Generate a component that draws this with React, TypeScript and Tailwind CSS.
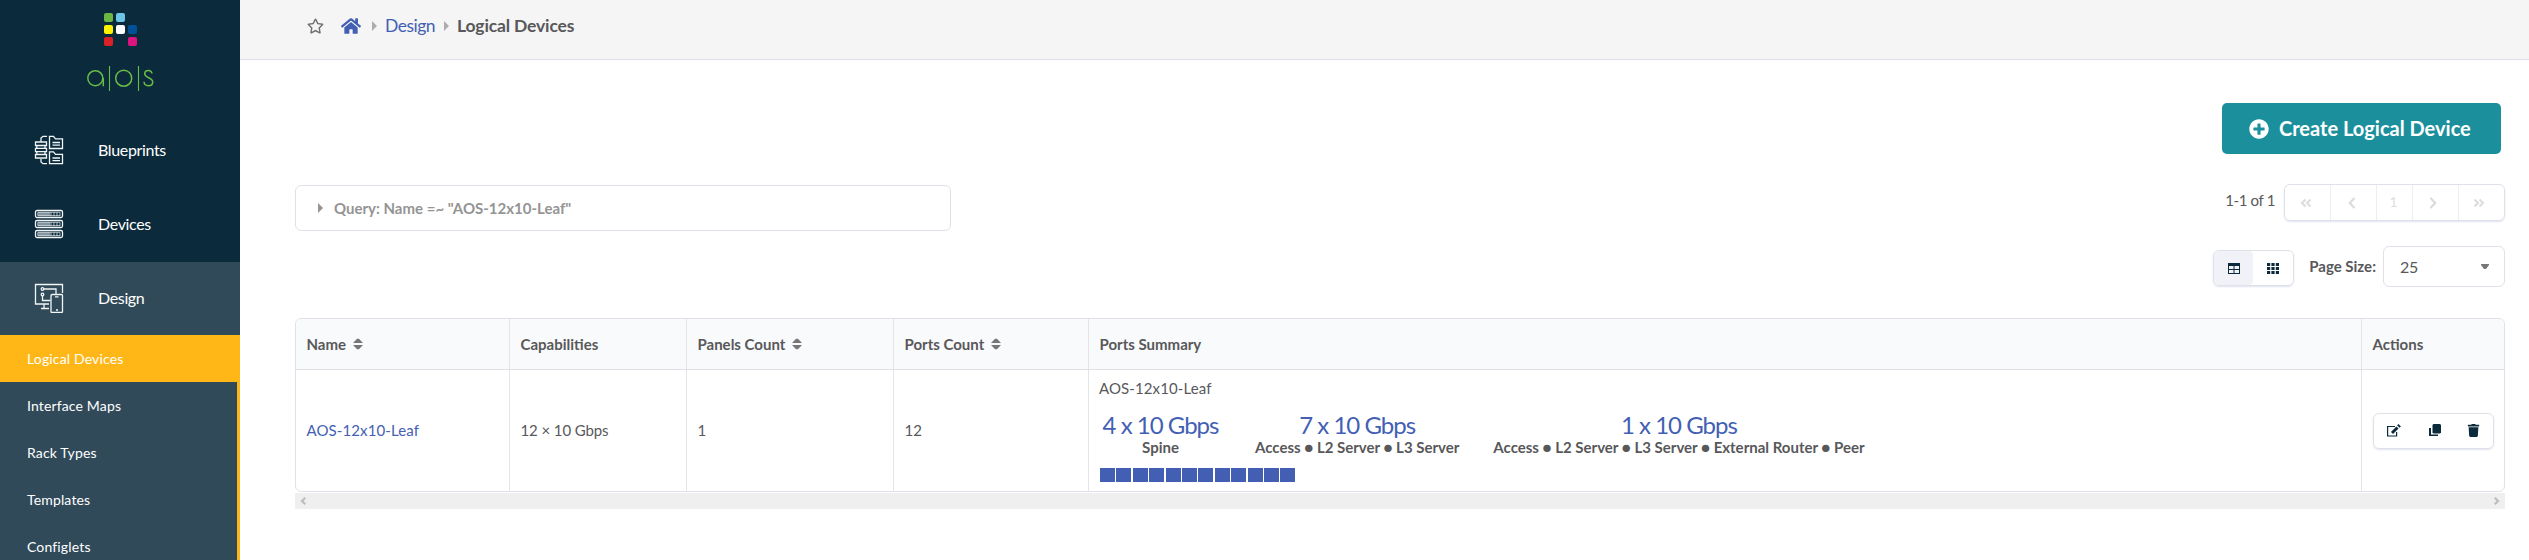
import React from "react";
import { FaHome, FaPlusCircle, FaRegStar, FaTrash } from "react-icons/fa";

const palette = ["#6cb644", "#6cc5e5", "", "#fff200", "#ffffff", "#005196", "#da2128", "", "#dc147f"];

function Logo() {
  return (
    <div className="flex h-[113px] flex-col items-center pt-[13px]">
      <div className="grid grid-cols-[9px_9px_9px] gap-[3px]">
        {palette.map((c, i) => (
          <i key={i} className="h-[9px] w-[9px] rounded-[2px]" style={{ background: c || "transparent" }} />
        ))}
      </div>
      <svg className="mt-[20px]" width="68" height="26" viewBox="0 0 68 26" fill="none" stroke="#68bd45" strokeWidth="1.5">
        <circle cx="9.3" cy="12.2" r="7.5" />
        <path d="M17.300 12v8.300" />
        <path d="M23.500 0v25M52.500 0v25" strokeWidth="1.100" />
        <circle cx="37.7" cy="12.2" r="8" />
        <path d="M66 7.500c-.3-1.800-1.700-2.900-3.600-2.900-2.100 0-3.700 1.300-3.700 3.200 0 4.600 8 3.200 8 8.100 0 2.300-1.800 3.800-4.200 3.800-2.500 0-4.300-1.500-4.500-3.900" />
      </svg>
    </div>
  );
}

function BlueprintsIcon() {
  return (
    <svg width="30" height="30" viewBox="0 0 30 30" fill="none" stroke="#f1f5f6" strokeWidth="1.300">
      <path d="M7 6.500V3l2-1.700h4M7 24v3l2 1.700h4M1.500 7h11v3.500h-11zM1.500 13.300h11v3.400h-11zM1.500 19.500h11V23h-11zM2.800 10.500v3M11 10.500v3M2.800 16.700v3M11 16.700v3" />
      <path d="M15.500 1.300h4l2 2.500h7v9.700h-13zM18.500 7.500h7.500M18.500 10.200h7.500M15.500 16.800h4l2 2.500h7v9.400h-13zM18.500 23h7.500M18.500 25.700h7.500" />
    </svg>
  );
}

function DevicesIcon() {
  return (
    <svg width="30" height="30" viewBox="0 0 30 30" fill="none" stroke="#f1f5f6" strokeWidth="1.300">
      {[1.5, 11.5, 21.5].map((y) => (
        <g key={y}>
          <rect x="1.500" y={y} width="27" height="7" rx="1.500" />
          <rect x="3" y={y + 1.8} width="13" height="3.500" fill="#8496a2" stroke="none" />
          <path d={`M4 ${y + 1.8}h22M4 ${y + 5.2}h22M17 ${y + 2}v3.500M20 ${y + 2}v3.500M23 ${y + 2}v3.500M26 ${y + 2}v3.500`} strokeWidth="0.900" opacity=".8" />
        </g>
      ))}
    </svg>
  );
}

function DesignIcon() {
  return (
    <svg width="30" height="30" viewBox="0 0 30 30" fill="none" stroke="#f1f5f6" strokeWidth="1.300">
      <path d="M15 21H1.500V1.500h27V10M10 21.500V25M7 25.500h8" />
      <rect x="17" y="11.500" width="11.500" height="18" rx="1" />
      <circle cx="8.500" cy="6" r="1.300" />
      <circle cx="8.500" cy="11.500" r="1.300" />
      <path d="M10 6h12v5M8.500 13v4.500H16.500M21 13.800h3.500M22 27h2" />
    </svg>
  );
}

const mainItems = [
  { label: "Blueprints", Icon: BlueprintsIcon },
  { label: "Devices", Icon: DevicesIcon },
  { label: "Design", Icon: DesignIcon },
];
const subItems = ["Interface Maps", "Rack Types", "Templates", "Configlets"];

function Sidebar() {
  return (
    <aside className="h-[560px] w-[240px] shrink-0 overflow-hidden bg-[#0b2a3b] text-white">
      <Logo />
      {mainItems.map(({ label, Icon }, i) => (
        <div key={label} className={i === 2 ? "flex h-[73px] items-center bg-[#304a5a] pb-[2px] pl-[34px]" : "flex h-[74.500px] items-center pb-px pl-[34px]"}>
          <Icon />
          <span className="ml-[34px] text-[16px] tracking-[-0.35px]">{label}</span>
        </div>
      ))}
      <div className="flex h-[47px] items-center bg-[#ffb718] pl-[27px] text-[14px] tracking-[0.15px]">Logical Devices</div>
      <div className="h-[188px] border-r-[3px] border-[#ffb718] bg-[#304a5a]">
        {subItems.map((s) => (
          <div key={s} className="flex h-[47px] items-center pl-[27px] text-[14px] tracking-[0.15px]">{s}</div>
        ))}
      </div>
    </aside>
  );
}

function RightArrow({ className = "" }: { className?: string }) {
  return (
    <svg width="5" height="10" viewBox="0 0 5 10" fill="currentColor" className={className}>
      <path d="M0 0 5 5 0 10z" />
    </svg>
  );
}

function Breadcrumbs() {
  return (
    <header className="flex h-[60px] border-b border-[#dedfe6] bg-[#f5f5f5] pl-[67px]">
      <div className="flex h-[52px] items-center text-[17.500px]">
        <FaRegStar className="w-[17px] text-[#6f6f6f]" size={16} />
        <FaHome className="ml-[17px] text-[#435fb4]" size={20} />
        <RightArrow className="ml-[11px] text-[#adadad]" />
        <span className="ml-[8px] w-[52px] tracking-[-0.5px] text-[#435fb4]">Design</span>
        <RightArrow className="ml-[7px] text-[#adadad]" />
        <b className="ml-[8px] tracking-[-0.15px] text-[#58585a]">Logical Devices</b>
      </div>
    </header>
  );
}

const pageButton = "flex h-full items-center justify-center border-r border-[#eeeef2]";

function Chevron({ flip = false, double = false }: { flip?: boolean; double?: boolean }) {
  return (
    <svg width="12" height="12" viewBox="0 0 12 12" fill="none" stroke="currentColor" strokeWidth="2" className={flip ? "rotate-180" : ""}>
      {double ? <path d="M5.500 2.500 2 6l3.500 3.500M10.500 2.500 7 6l3.500 3.500" /> : <path d="M8.500 1 3.800 6l4.700 5" strokeWidth="2.300" />}
    </svg>
  );
}

function ScrollArrow({ flip = false }: { flip?: boolean }) {
  return (
    <svg width="6" height="8" viewBox="0 0 6 8" fill="none" stroke="#bdbdbd" strokeWidth="2.200" className={flip ? "rotate-180" : ""}>
      <path d="M5.200.800 2 4l3.200 3.200" />
    </svg>
  );
}

function SortIcon() {
  return (
    <svg width="10" height="12" viewBox="0 0 10 12" fill="#77777a" className="ml-[7px]">
      <path d="M0 5 4 .700h2L10 5zM0 7h10L6 11.300H4z" />
    </svg>
  );
}

function TableIcon() {
  return (
    <svg width="12" height="11" viewBox="0 0 12 11">
      <path fill="#0b2a3b" fillRule="evenodd" d="M0 0h12v11H0zM1 3v3h4.500V3zM6.500 3v3H11V3zM1 7v3h4.500V7zM6.500 7v3H11V7z" />
    </svg>
  );
}

function GridIcon() {
  return (
    <svg width="12" height="11" viewBox="0 0 12 11" fill="#0b2a3b">
      {[0, 4, 8].map((y) => [0, 4.4, 8.8].map((x) => <rect key={`${x}-${y}`} x={x} y={y} width="3.200" height="3" />))}
    </svg>
  );
}

function EditIcon() {
  return (
    <svg width="15" height="13" viewBox="0 0 15 13" fill="none" stroke="#0b2a3b">
      <path d="M8 2.500H.600v9.500h9V8" strokeWidth="1.200" />
      <path d="M5 9 10.500 3.500" strokeWidth="3" />
      <path d="m11.300 2.600 1.400-1.300" strokeWidth="3.400" />
    </svg>
  );
}

function CopyIcon() {
  return (
    <svg width="12" height="13" viewBox="0 0 12 13" fill="#0b2a3b">
      <path d="M4.500 0H11l1 1v7.500l-1 1H4.500l-1-1V1z" />
      <path d="M0 4h2v6.500h7V12H0z" />
    </svg>
  );
}

const columns = [
  { label: "Name", sort: true },
  { label: "Capabilities", sort: false },
  { label: "Panels Count", sort: true },
  { label: "Ports Count", sort: true },
  { label: "Ports Summary", sort: false },
  { label: "Actions", sort: false },
];
const groups = [
  { speed: "4 x 10 Gbps", roles: "Spine" },
  { speed: "7 x 10 Gbps", roles: "Access ● L2 Server ● L3 Server" },
  { speed: "1 x 10 Gbps", roles: "Access ● L2 Server ● L3 Server ● External Router ● Peer" },
];
const gridCols = "grid grid-cols-[214px_177px_207px_195px_1273px_142px]";
const cell = "flex items-center border-r border-[#e3e4e8] pl-[10.500px] last:border-r-0";

function Table() {
  return (
    <div className="h-[174px] overflow-hidden rounded-[6px] border border-[#dfe0e8]">
      <div className={`${gridCols} h-[51px] border-b border-[#dfe0e4] bg-[#f9fafb] font-bold`}>
        {columns.map((c) => (
          <div key={c.label} className={cell}>
            {c.label}
            {c.sort && <SortIcon />}
          </div>
        ))}
      </div>
      <div className={`${gridCols} h-[121px]`}>
        <div className={`${cell} tracking-[0.1px] text-[#435fb4]`}>AOS-12x10-Leaf</div>
        <div className={`${cell} tracking-[-0.1px]`}>12 × 10 Gbps</div>
        <div className={cell}>1</div>
        <div className={cell}>12</div>
        <div className="border-r border-[#e3e4e8] pl-[11px] pt-[7px]">
          <div className="-ml-px h-[22px] leading-[22px] tracking-[0.1px]">AOS-12x10-Leaf</div>
          <div className="mt-[14px] flex gap-[34px]">
            {groups.map((g) => (
              <div key={g.speed} className="min-w-[121px] text-center">
                <div className="h-[24px] text-[24px] leading-[24px] tracking-[-1px] text-[#435fb4]">{g.speed}</div>
                <div className="h-[20px] text-[15px] font-bold leading-[20px]">{g.roles}</div>
              </div>
            ))}
          </div>
          <div className="mt-[11px] flex gap-[1.400px]">
            {Array.from({ length: 12 }, (_, i) => (
              <i key={i} className="h-[14px] w-[15px] bg-[#435fb4]" />
            ))}
          </div>
        </div>
        <div className="flex items-center pl-[11px]">
          <div className="flex h-[36px] w-[121px] items-center rounded-[6px] border border-[#dfe0e8] pl-[13px] shadow-[0_1px_2px_#dfe3ee]">
            <EditIcon />
            <span className="ml-[27px]"><CopyIcon /></span>
            <FaTrash className="ml-[26px] text-[#0b2a3b]" size={13} />
          </div>
        </div>
      </div>
    </div>
  );
}

export default function App() {
  return (
    <div className="flex h-[560px] w-[2529px] overflow-hidden bg-white font-['Lato',sans-serif] text-[15px] text-[#58585a]">
      <Sidebar />
      <div className="min-w-0 flex-1">
        <Breadcrumbs />
        <main className="pl-[55px] pr-[24px]">
          <div className="flex h-[124px] justify-end pr-[4px] pt-[43px]">
            <button className="flex h-[51px] w-[279px] items-center rounded-[5px] bg-[#1b909c] pl-[27px] text-[20px] font-bold text-white">
              <FaPlusCircle size={20} />
              <span className="mb-px ml-[10px]">Create Logical Device</span>
            </button>
          </div>
          <div className="flex h-[62px] justify-between">
            <div className="mt-px flex h-[46px] w-[656px] items-center rounded-[6px] border border-[#dfe0e8] pl-[22px] font-bold text-[#949494]">
              <RightArrow />
              <span className="ml-[11px]">Query: Name =~ "AOS-12x10-Leaf"</span>
            </div>
            <div className="flex">
              <span className="mr-[9px] mt-[5px] leading-[22px] tracking-[-0.35px]">1-1 of 1</span>
              <div className="flex h-[37px] w-[221px] overflow-hidden rounded-[6px] border border-[#dfe0e8] text-[13px] text-[#dcdcdd] shadow-[0_1px_2px_#dfe3ee]">
                <div className={`${pageButton} w-[46px] pr-[4px]`}><Chevron double /></div>
                <div className={`${pageButton} w-[46px] pr-[3px]`}><Chevron /></div>
                <div className={`${pageButton} w-[36px] pr-[2px]`}>1</div>
                <div className={`${pageButton} w-[46px] pr-[6px]`}><Chevron flip /></div>
                <div className="flex flex-1 items-center justify-center pr-[5px]"><Chevron flip double /></div>
              </div>
            </div>
          </div>
          <div className="flex h-[72px] justify-end">
            <div className="mt-[4px] flex h-[36px] w-[81px] overflow-hidden rounded-[6px] border border-[#dfe0e8] shadow-[0_1px_2px_#dfe3ee]">
              <div className="flex w-[39px] items-center justify-center rounded-[4px] bg-[#f0f2f8]"><TableIcon /></div>
              <div className="flex flex-1 items-center justify-center"><GridIcon /></div>
            </div>
            <b className="ml-[15px] mt-[9px] leading-[22px]">Page Size:</b>
            <div className="ml-[7px] flex h-[41px] w-[122px] items-center justify-between rounded-[6px] border border-[#dfe0e8] pl-[16px] pr-[15px] text-[16px] tracking-[-0.3px]">
              25
              <svg width="8" height="5" viewBox="0 0 8 5" fill="#77777a">
                <path d="M0 0h8v1L5 5H3L0 1z" />
              </svg>
            </div>
          </div>
          <Table />
          <div className="mt-px flex h-[16px] items-center justify-between bg-[#efefef] px-[5px]">
            <ScrollArrow />
            <ScrollArrow flip />
          </div>
        </main>
      </div>
    </div>
  );
}
